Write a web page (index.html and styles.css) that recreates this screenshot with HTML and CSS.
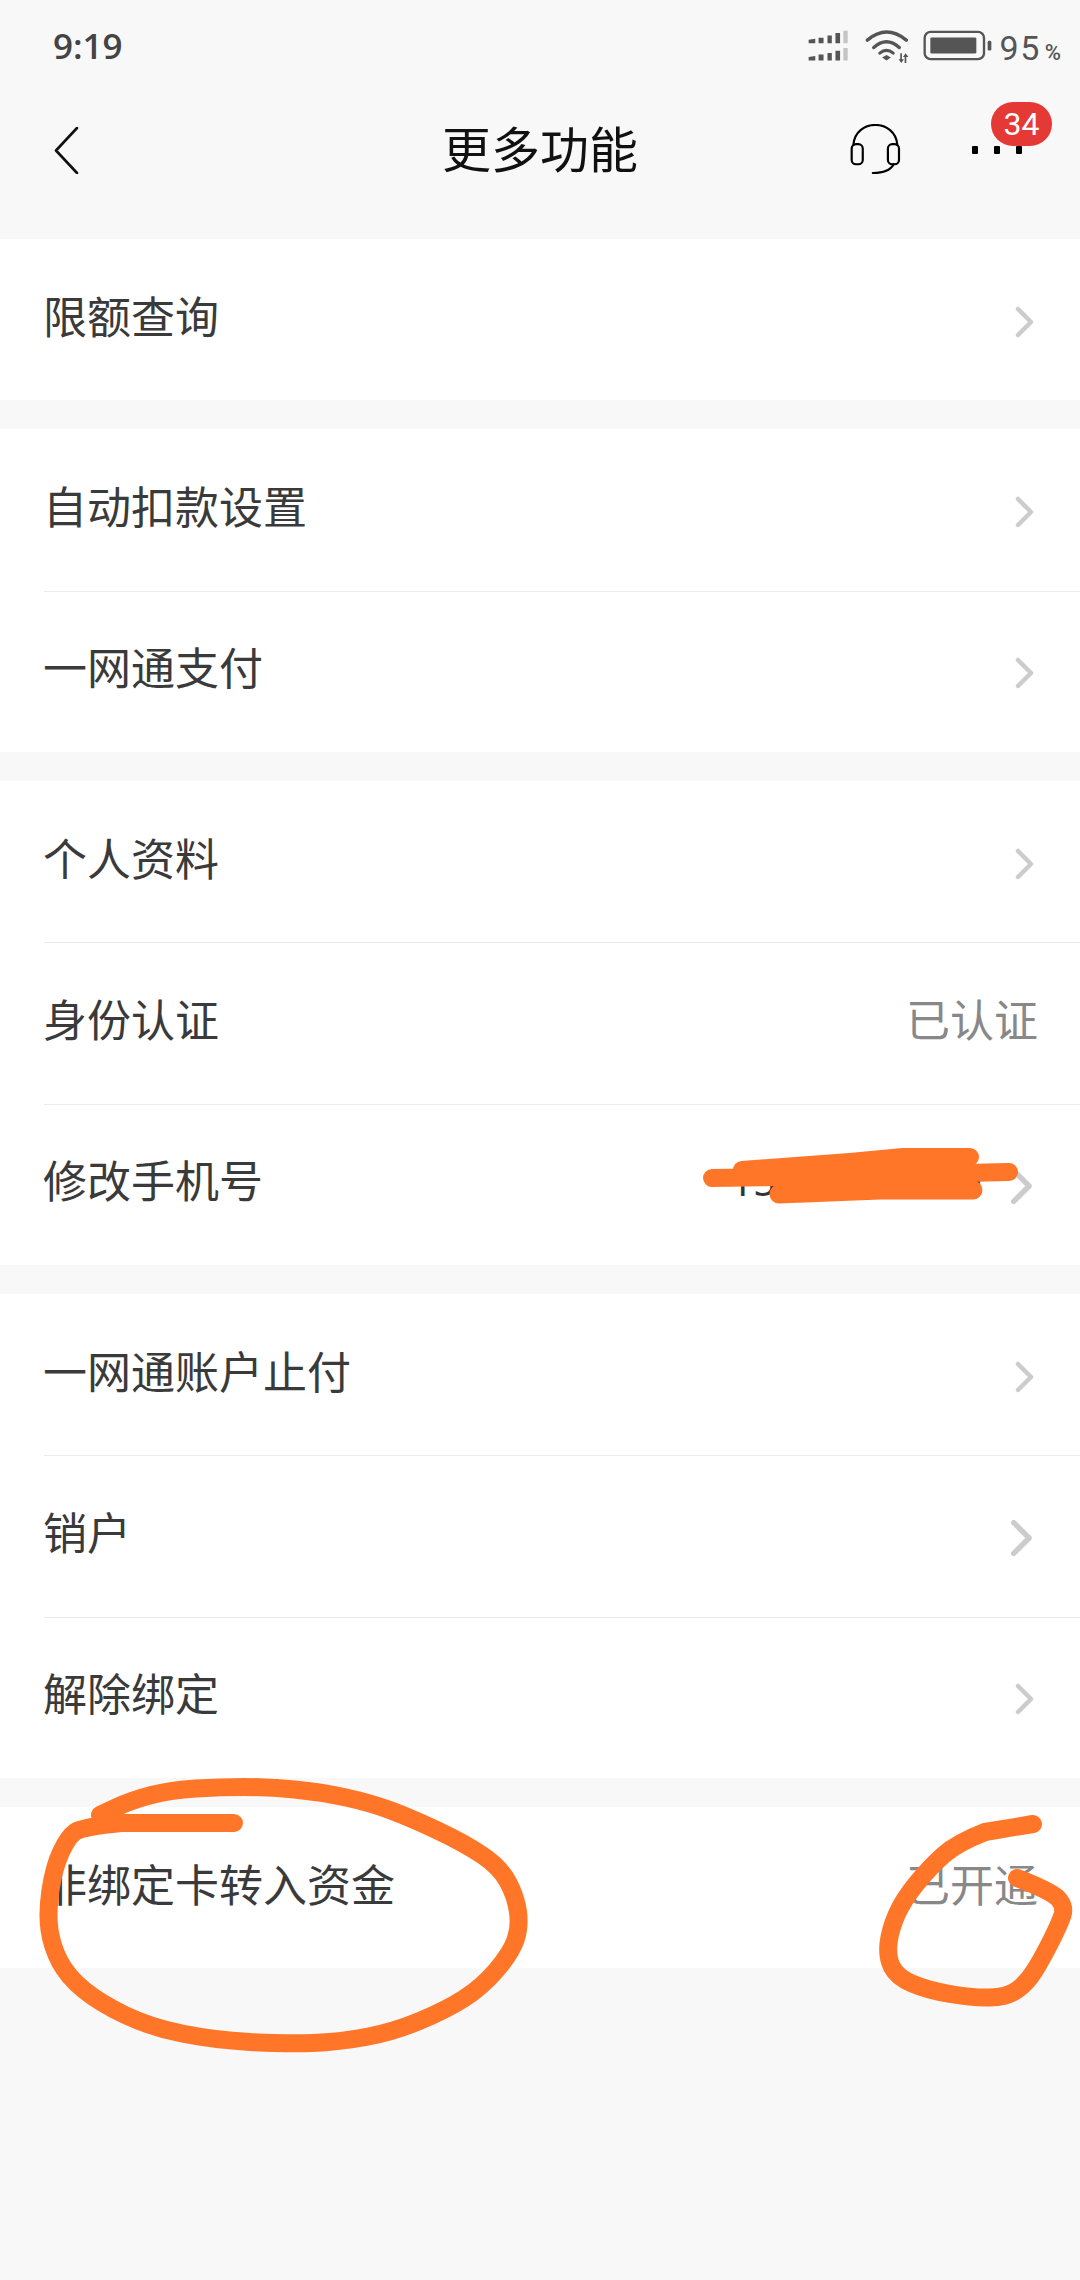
FILE: index.html
```html
<!DOCTYPE html>
<html lang="zh-CN">
<head>
<meta charset="utf-8">
<title>更多功能</title>
<link rel="stylesheet" href="styles.css">
</head>
<body>
<div class="page">
  <div class="status">
    <span class="time">9:19</span>
    <div class="status-icons">
      <svg class="ic-signal" viewBox="140 90 130 105">
        <g fill="#555">
          <path d="M145 125l20-3v14h-20zM175 119h15v17h-15zM202 112h13v24h-13zM226 105h14v31h-14z"/>
          <path d="M145 177l20-3v14h-20zM175 170h15v18h-15zM202 165h13v23h-13zM226 158h14v30h-14z"/>
        </g>
        <path fill="#c4c4c4" d="M250 98h13v38h-13zM250 150h13v38h-13z"/>
      </svg>
      <svg class="ic-wifi" viewBox="305 90 140 110">
        <g fill="none" stroke="#555" stroke-width="10" stroke-linecap="round">
          <path d="M318 126Q375 78 434 126"/>
          <path d="M337 148Q375 114 413 148"/>
          <path d="M355 165Q375 148 395 165" stroke-width="9"/>
        </g>
        <path fill="#555" d="M375 170l13 8-13 9-13-9z"/>
        <path fill="#555" d="M415 165h5v18h6l-8 11-8-11h5zM428 194h5v-18h6l-8-11-8 11h5z" transform="translate(1 0)"/>
      </svg>
      <svg class="ic-battery" viewBox="485 95 207 92">
        <rect x="490" y="100" width="178" height="82" rx="18" fill="none" stroke="#555" stroke-width="7"/>
        <rect x="507" y="117" width="138" height="48" rx="4" fill="#555"/>
        <rect x="679" y="127" width="11" height="29" rx="4" fill="#555"/>
      </svg>
      <span class="pct">95<small>%</small></span>
    </div>
  </div>

  <header class="nav">
    <svg class="ic-back" viewBox="0 0 25 47">
      <path d="M23 1L2 23.5 23 46" fill="none" stroke="#111" stroke-width="2.6" stroke-linecap="round" stroke-linejoin="round"/>
    </svg>
    <h1 class="title">更多功能</h1>
    <div class="nav-actions">
      <svg class="ic-headset" viewBox="265 372 155 155">
        <g fill="none" stroke="#000" stroke-width="6.5" stroke-linecap="round">
          <path d="M278 435C282 355 405 355 409 435"/>
          <rect x="273" y="432" width="33" height="60" rx="13"/>
          <rect x="381" y="432" width="33" height="60" rx="13"/>
          <path d="M398 492Q385 518 336 518"/>
        </g>
      </svg>
      <div class="more">
        <i></i><i></i><i></i>
        <span class="badge">34</span>
      </div>
    </div>
  </header>

  <main class="groups">
    <section class="group">
      <div class="row"><span>限额查询</span><svg class="chev" viewBox="0 0 20 32"><path d="M3 3l13 13L3 29"/></svg></div>
    </section>
    <section class="group">
      <div class="row"><span>自动扣款设置</span><svg class="chev" viewBox="0 0 20 32"><path d="M3 3l13 13L3 29"/></svg></div>
      <div class="row"><span>一网通支付</span><svg class="chev" viewBox="0 0 20 32"><path d="M3 3l13 13L3 29"/></svg></div>
    </section>
    <section class="group">
      <div class="row"><span>个人资料</span><svg class="chev" viewBox="0 0 20 32"><path d="M3 3l13 13L3 29"/></svg></div>
      <div class="row row-value"><span>身份认证</span><span class="value">已认证</span></div>
      <div class="row"><span>修改手机号</span><span class="phone">15000000000</span><svg class="chev chev-big" viewBox="0 0 20 32"><path d="M3 3l13 13L3 29"/></svg></div>
    </section>
    <section class="group">
      <div class="row"><span>一网通账户止付</span><svg class="chev" viewBox="0 0 20 32"><path d="M3 3l13 13L3 29"/></svg></div>
      <div class="row"><span>销户</span><svg class="chev chev-big" viewBox="0 0 20 32"><path d="M3 3l13 13L3 29"/></svg></div>
      <div class="row"><span>解除绑定</span><svg class="chev" viewBox="0 0 20 32"><path d="M3 3l13 13L3 29"/></svg></div>
    </section>
    <section class="group">
      <div class="row row-value"><span>非绑定卡转入资金</span><span class="value">已开通</span></div>
    </section>
  </main>

  <svg class="markup" viewBox="0 0 1080 2280">
    <g fill="none" stroke="#ff7628" stroke-linecap="round" stroke-linejoin="round">
      <path stroke-width="18" d="M234 1823L121 1823Q82 1827 75 1832Q68 1837 61 1852Q54 1867 50.500 1890Q47 1913 49.500 1930Q52 1947 60 1962Q68 1977 84 1990Q100 2003 125 2015Q150 2027 182 2033.500Q214 2040 250 2042Q286 2044 312.500 2043Q339 2042 366 2037Q393 2032 419.500 2021Q446 2010 464 1998.500Q482 1987 496.500 1970Q511 1953 515.500 1940Q520 1927 518 1912Q516 1897 508 1882Q500 1867 482 1855Q464 1843 437.500 1830.500Q411 1818 391 1810.500Q371 1803 346 1797.500Q321 1792 294.500 1789.500Q268 1787 244.500 1787Q221 1787 196 1788.500Q171 1790 151.500 1795Q132 1800 116 1807.500L100 1815"/>
      <path stroke-width="18" d="M1033 1824L985 1832Q957 1843 943.500 1855Q930 1867 916.500 1883.500Q903 1900 896.500 1915Q890 1930 888.500 1943.500Q887 1957 892 1967Q897 1977 912 1983.500Q927 1990 950 1994Q973 1998 990 1997.500Q1007 1997 1017 1990Q1027 1983 1035 1970Q1043 1957 1051.500 1940Q1060 1923 1062.500 1915Q1065 1907 1059 1899.500Q1053 1892 1017 1878"/>
      <path stroke-width="18" d="M712 1178L790 1177L1009 1172"/>
      <path stroke-width="18" d="M742 1170L850 1162L903 1157L970 1157"/>
      <path stroke-width="19" d="M779 1194L880 1190L973 1190"/>
    </g>
    <path fill="#ff7628" d="M745 1170L903 1157L970 1157L975 1190L779 1190L786 1178z"/>
  </svg>
</div>
</body>
</html>
```

FILE: styles.css
```css
* { box-sizing: border-box; }
html, body { margin: 0; padding: 0; }
body {
  background: #f8f8f8;
  font-family: "Noto Sans CJK SC", "Noto Sans", sans-serif;
  color: #333;
}
.page {
  position: relative;
  width: 1080px;
  height: 2280px;
  overflow: hidden;
}
.status {
  height: 94px;
  display: flex;
  align-items: center;
  justify-content: space-between;
  padding: 0 19px 0 53px;
}
.time {
  font-family: "Open Sans", sans-serif;
  font-weight: 600;
  font-size: 35px;
  line-height: 44px;
  margin-top: -2px;
  color: #444;
}
.status-icons {
  display: flex;
  align-items: flex-start;
  height: 36px;
  margin-top: 1px;
}
.ic-signal { width: 43px; height: 35px; margin-top: -2px; margin-right: 13px; }
.ic-wifi { width: 47px; height: 37px; margin-top: -2px; margin-right: 13px; }
.ic-battery { width: 69px; height: 31px; margin-right: 8px; }
.pct {
  font-family: "Roboto", sans-serif;
  font-size: 34px;
  line-height: 36px;
  letter-spacing: 1.5px;
  color: #555;
  white-space: nowrap;
}
.pct small {
  font-size: 22px;
  font-weight: 500;
  margin-left: 4px;
  letter-spacing: 0;
}
.nav {
  height: 112px;
  margin-bottom: 33px;
  display: grid;
  grid-template-columns: 1fr auto 1fr;
  align-items: center;
  padding: 0 54px;
}
.ic-back { width: 25px; height: 47px; }
.title {
  margin: 0 0 5px;
  font-size: 49px;
  font-weight: 400;
  line-height: 1.2;
  color: #111;
}
.nav-actions {
  display: flex;
  align-items: center;
  justify-content: flex-end;
  gap: 71px;
  padding-right: 4px;
}
.ic-headset { width: 52px; height: 52px; }
.more {
  position: relative;
  display: flex;
  gap: 16px;
}
.more i {
  display: block;
  width: 6px;
  height: 8px;
  background: #000;
  border-radius: 1px;
}
.badge {
  position: absolute;
  left: 19px;
  top: -44px;
  width: 61px;
  height: 44px;
  border-radius: 22px;
  background: #e53935;
  color: #fff;
  font-family: "Roboto", sans-serif;
  font-size: 32px;
  line-height: 44px;
  text-align: center;
}
.groups {
  display: flex;
  flex-direction: column;
  gap: 29px;
}
.group { background: #fff; }
.row {
  position: relative;
  height: 161.33px;
  display: flex;
  align-items: center;
  justify-content: space-between;
  padding: 0 45px 10px 43px;
  font-size: 44px;
  color: #3a3a3a;
}
.row + .row::before {
  content: "";
  position: absolute;
  left: 44px;
  right: 0;
  top: 0;
  height: 1px;
  background: #ececec;
}
.row-value { padding-right: 42px; }
.value { color: #888; }
.phone {
  margin-left: auto;
  margin-top: 2px;
  margin-right: 28px;
  font-family: "Noto Sans", sans-serif;
  font-size: 40px;
  color: #333;
}
.chev {
  width: 20px;
  height: 32px;
  margin-top: 14px;
  fill: none;
  stroke: #ccc;
  stroke-width: 4.5;
  stroke-linecap: round;
  stroke-linejoin: round;
}
.chev-big {
  width: 24px;
  height: 38px;
  margin-right: 1px;
}
.markup {
  position: absolute;
  left: 0;
  top: 0;
  width: 1080px;
  height: 2280px;
  pointer-events: none;
}
```
